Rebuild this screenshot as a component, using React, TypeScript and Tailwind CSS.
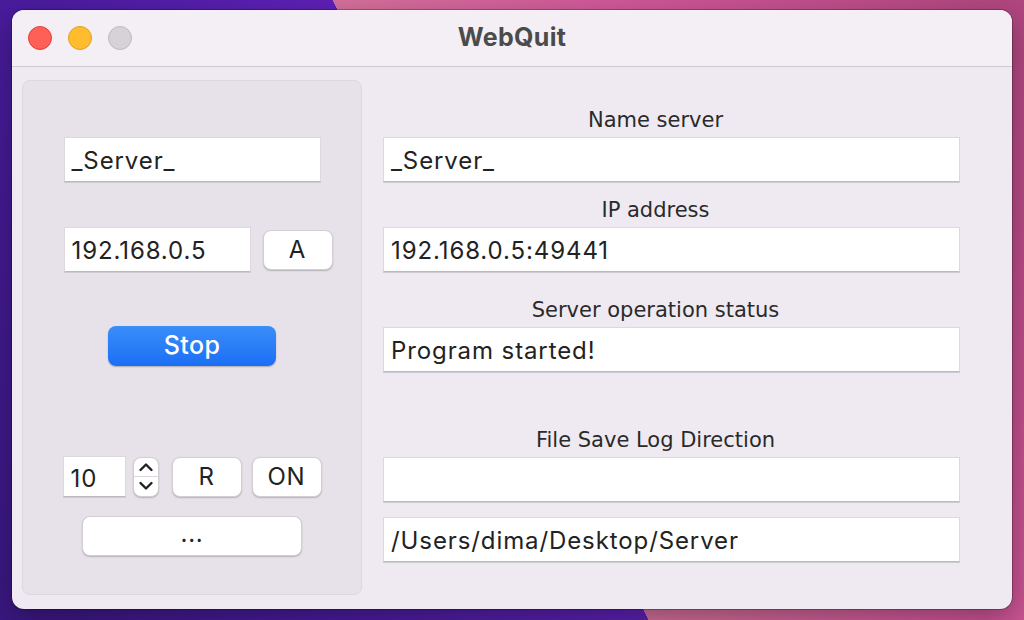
import type { ReactNode } from "react";

const sans = "font-['Inter','Liberation_Sans',sans-serif]";
const label = "font-['DejaVu_Sans','Liberation_Sans',sans-serif]";

function Field({ value = "", className = "" }: { value?: string; className?: string }) {
  return (
    <div
      className={`bg-white border border-[#dcd8de] border-b-[#bdb9c0] shadow-[0_1px_0_#cfcbd2] flex items-center pl-[7px] pt-[3px] text-[24px] tracking-[0.9px] text-[#222] ${sans} ${className}`}
    >
      {value}
    </div>
  );
}

function Button({ children, className = "" }: { children: ReactNode; className?: string }) {
  return (
    <div
      className={`bg-white rounded-[8px] border-[0.5px] border-[#d2ced4] shadow-[0_1px_1.5px_rgba(0,0,0,0.22)] flex items-center justify-center text-[24px] tracking-[0.8px] text-[#222] ${sans} ${className}`}
    >
      {children}
    </div>
  );
}

function Stepper() {
  return (
    <div className="w-[26px] h-[40px] bg-white rounded-[8px] border-[0.5px] border-[#d2ced4] shadow-[0_1px_1.5px_rgba(0,0,0,0.22)] flex flex-col">
      <div className="flex-1 flex items-center justify-center border-b border-[#dcd8de]">
        <svg width="16" height="10" viewBox="0 0 16 10">
          <path d="M2.5 8 L8 2.5 L13.5 8" fill="none" stroke="#222" strokeWidth="2.4" strokeLinecap="round" strokeLinejoin="round" />
        </svg>
      </div>
      <div className="flex-1 flex items-center justify-center">
        <svg width="16" height="10" viewBox="0 0 16 10">
          <path d="M2.5 2 L8 7.5 L13.5 2" fill="none" stroke="#222" strokeWidth="2.4" strokeLinecap="round" strokeLinejoin="round" />
        </svg>
      </div>
    </div>
  );
}

function Label({ children, className = "" }: { children: ReactNode; className?: string }) {
  return (
    <div className={`h-[24px] leading-[24px] text-center pr-[32px] text-[21px] text-[#2a2a2a] ${label} ${className}`}>
      {children}
    </div>
  );
}

export default function App() {
  return (
    <div className="w-[1024px] h-[620px] overflow-hidden pt-[10px] pl-[12px] bg-[linear-gradient(63deg,#3a1882_0%,#4a1c9e_25%,#5f21b8_48.4%,#d6719c_48.4%,#d2589a_70%,#b0467f_100%)]">
      <div className="w-[1000px] h-[599px] rounded-[12px] overflow-hidden flex flex-col bg-[#efeaf1] shadow-[0_0_0_1px_rgba(0,0,0,0.25),0_10px_30px_rgba(0,0,0,0.35)]">
        {/* Title bar */}
        <div className="h-[57px] shrink-0 bg-[#f3eff5] border-b border-[#cdc9cf] flex items-center px-[16px] relative">
          <div className="flex items-center gap-[16px]">
            <div className="w-[24px] h-[24px] rounded-full bg-[#fe5f57] border border-[#e0443e]" />
            <div className="w-[24px] h-[24px] rounded-full bg-[#febc2e] border border-[#dea123]" />
            <div className="w-[24px] h-[24px] rounded-full bg-[#d6d2d8] border border-[#bebac0]" />
          </div>
          <div className={`absolute inset-0 flex items-center justify-center text-[25px] tracking-[0.3px] font-bold text-[#4b4b4b] ${sans}`}>
            WebQuit
          </div>
        </div>

        {/* Body */}
        <div className="flex-1 flex pl-[10px] pt-[13px]">
          {/* Left panel */}
          <div className="w-[340px] h-[515px] rounded-[8px] bg-[#e7e2e9] border border-[#dcd7de] flex flex-col items-center pt-[56px]">
            <Field value="_Server_" className="w-[257px] h-[45px]" />
            <div className="flex items-center gap-[12px] mt-[45px] ml-[12px]">
              <Field value="192.168.0.5" className="w-[187px] h-[45px]" />
              <Button className="w-[70px] h-[40px]">A</Button>
            </div>
            <div
              className={`mt-[54px] w-[168px] h-[40px] rounded-[8px] bg-[linear-gradient(#3a8ef9,#1b6ef5)] shadow-[0_1px_1.5px_rgba(0,0,0,0.25)] flex items-center justify-center text-white text-[25px] tracking-[0.4px] font-medium ${sans}`}
            >
              Stop
            </div>
            <div className="flex items-center mt-[90px]">
              <Field value="10" className="w-[63px] h-[41px] pt-[5px]" />
              <div className="ml-[7px]">
                <Stepper />
              </div>
              <Button className="ml-[13px] w-[70px] h-[40px]">R</Button>
              <Button className="ml-[10px] w-[70px] h-[40px]">ON</Button>
            </div>
            <Button className="mt-[19px] w-[220px] h-[40px] text-[18px] pb-[4px]">...</Button>
          </div>

          {/* Right column */}
          <div className="ml-[21px] w-[577px] flex flex-col pt-[28px]">
            <Label>Name server</Label>
            <Field value="_Server_" className="mt-[5px] h-[45px]" />
            <Label className="mt-[16px]">IP address</Label>
            <Field value="192.168.0.5:49441" className="mt-[5px] h-[45px]" />
            <Label className="mt-[26px]">Server operation status</Label>
            <Field value="Program started!" className="mt-[5px] h-[45px]" />
            <Label className="mt-[56px]">File Save Log Direction</Label>
            <Field className="mt-[5px] h-[45px]" />
            <Field value="/Users/dima/Desktop/Server" className="mt-[15px] h-[45px]" />
          </div>
        </div>
      </div>
    </div>
  );
}
